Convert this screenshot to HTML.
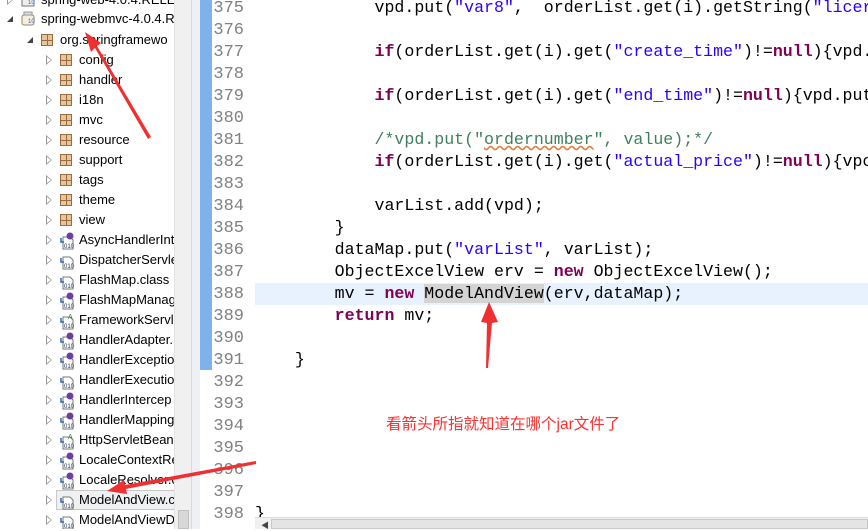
<!DOCTYPE html>
<html><head><meta charset="utf-8"><style>
*{margin:0;padding:0;box-sizing:border-box}
body{width:868px;height:529px;overflow:hidden;background:#fff;position:relative;font-family:"Liberation Sans","Noto Sans CJK SC",sans-serif}
.tree{position:absolute;left:0;top:0;width:174px;height:529px;background:#fff;overflow:hidden}
.row{position:absolute;height:20px;line-height:20px;font-size:13px;color:#000;white-space:nowrap}
.tri{position:absolute;top:5px;width:0;height:0;border-top:5px solid transparent;border-bottom:5px solid transparent;border-left:6px solid #fff}
.tri:before{content:"";position:absolute;left:-7px;top:-5px;border-top:5px solid transparent;border-bottom:5px solid transparent;border-left:6px solid #999}
.tri i{position:absolute;left:-6px;top:-3px;border-top:3px solid transparent;border-bottom:3px solid transparent;border-left:4px solid #fff}
.open{position:absolute;top:7px;width:0;height:0;border-left:6px solid transparent;border-bottom:6px solid #444}
.pk{position:absolute;top:4px;width:12px;height:12px;background:
linear-gradient(#9a6a40,#9a6a40) 0 5px/12px 1px no-repeat,
linear-gradient(#9a6a40,#9a6a40) 5px 0/1px 12px no-repeat,#e8c49a;border:1px solid #9a6a40}
.ic{position:absolute;top:2px}
.vs{position:absolute;left:174px;top:0;width:17px;height:529px;background:#f0f0f0;border-left:1px solid #e3e3e3}
.gutL{position:absolute;left:191px;top:0;width:9px;height:529px;background:#eef0f6;border-left:1px solid #d8d8e4}
.chk{position:absolute;left:200px;top:0;width:12px;height:370px;background:#7fb2ea}
.ln{position:absolute;left:212px;width:38px;text-align:right;padding-right:6px;font-family:"Liberation Mono",monospace;font-size:17px;color:#808080;height:22px;line-height:24px;background:#fff}
.cl{position:absolute;left:255px;height:22px;line-height:22px;font-family:"Liberation Mono",monospace;font-size:16.6px;color:#000;white-space:pre;width:613px}
.k{color:#7f0055;font-weight:bold}.s{color:#2a00ff}.c{color:#3f7f5f}
.hl{background:#e8f2fe}
.sel{background:#d4d4d4}
.hs{position:absolute;left:255px;top:517px;width:613px;height:12px;background:#f0f0f0;border-top:1px solid #ddd}
</style></head><body>
<div class="tree">
<div class="row" style="top:-10px;left:0;width:174px"><span class="tri" style="left:8px"><i></i></span><svg class="ic" style="left:20px" width="16" height="16"><rect x="2" y="3" width="12" height="11" fill="#eee" stroke="#777"/><text x="8" y="12" font-size="6" fill="#36c" font-family="Liberation Sans">10</text></svg><span style="position:absolute;left:41px">spring-web-4.0.4.RELEA</span></div>
<div class="row" style="top:9px;left:0;width:174px"><span class="open" style="left:7px"></span><svg class="ic" style="left:20px" width="16" height="16"><rect x="2" y="4" width="12" height="10" rx="2" fill="#f4eedc" stroke="#998866"/><rect x="4" y="1" width="8" height="3" fill="#ddd" stroke="#999"/><text x="8" y="12" font-size="6" fill="#36c" font-family="Liberation Sans">10</text></svg><span style="position:absolute;left:41px">spring-webmvc-4.0.4.R</span></div>
<div class="row" style="top:30px;left:0;width:174px"><span class="open" style="left:27px"></span><span class="pk" style="left:41px"></span><span style="position:absolute;left:60px">org.springframewo</span></div>
<div class="row" style="top:490px;left:56px;width:120px;height:20px;background:#eef0f2;border:1px solid #c8c8c8"></div>
</div>
<div class="vs"><div style="position:absolute;left:3px;top:510px;width:11px;height:19px;background:#d8d8d8;border:1px solid #c0c0c0"></div></div>
<div class="gutL"></div>
<div class="chk"></div>

<div class="ln" style="top:-3px">375</div><div class="ln" style="top:19px">376</div><div class="ln" style="top:41px">377</div><div class="ln" style="top:63px">378</div><div class="ln" style="top:85px">379</div><div class="ln" style="top:107px">380</div><div class="ln" style="top:129px">381</div><div class="ln" style="top:151px">382</div><div class="ln" style="top:173px">383</div><div class="ln" style="top:195px">384</div><div class="ln" style="top:217px">385</div><div class="ln" style="top:239px">386</div><div class="ln" style="top:261px">387</div><div class="ln" style="top:283px">388</div><div class="ln" style="top:305px">389</div><div class="ln" style="top:327px">390</div><div class="ln" style="top:349px">391</div><div class="ln" style="top:371px">392</div><div class="ln" style="top:393px">393</div><div class="ln" style="top:415px">394</div><div class="ln" style="top:437px">395</div><div class="ln" style="top:459px">396</div><div class="ln" style="top:481px">397</div><div class="ln" style="top:503px">398</div>

<div class="cl" style="top:-3px">            vpd.put(<span class="s">"var8"</span>,  orderList.get(i).getString(<span class="s">"licer</span></div>
<div class="cl" style="top:41px">            <span class="k">if</span>(orderList.get(i).get(<span class="s">"create_time"</span>)!=<span class="k">null</span>){vpd.</div>
<div class="cl" style="top:85px">            <span class="k">if</span>(orderList.get(i).get(<span class="s">"end_time"</span>)!=<span class="k">null</span>){vpd.put</div>
<div class="cl c" style="top:129px">            /*vpd.put("<span style="text-decoration:underline wavy #e08040">ordernumber</span>", value);*/</div>
<div class="cl" style="top:151px">            <span class="k">if</span>(orderList.get(i).get(<span class="s">"actual_price"</span>)!=<span class="k">null</span>){vpc</div>
<div class="cl" style="top:195px">            varList.add(vpd);</div>
<div class="cl" style="top:217px">        }</div>
<div class="cl" style="top:239px">        dataMap.put(<span class="s">"varList"</span>, varList);</div>
<div class="cl" style="top:261px">        ObjectExcelView erv = <span class="k">new</span> ObjectExcelView();</div>
<div class="cl hl" style="top:283px">        mv = <span class="k">new</span> <span class="sel">ModelAndView</span>(erv,dataMap);</div>
<div class="cl" style="top:305px">        <span class="k">return</span> mv;</div>
<div class="cl" style="top:349px">    }</div>
<div class="cl" style="top:503px">}</div>
<div style="position:absolute;left:386px;top:412px;font-size:15.5px;color:#ff3030;font-family:'Liberation Sans','Noto Sans CJK SC',sans-serif">看箭头所指就知道在哪个jar文件了</div>
<div class="hs"><span style="position:absolute;left:6px;top:2px;font-size:8px;color:#444">◀</span><div style="position:absolute;left:16px;top:1px;width:597px;height:10px;background:#e4e4e4;border:1px solid #c8c8c8"></div></div>

<div style="position:absolute;left:0;top:0">
<div class="row" style="top:50px"><span class="tri" style="left:47px"><i></i></span><span class="pk" style="left:60px"></span><span style="position:absolute;left:79px">config</span></div>
<div class="row" style="top:70px"><span class="tri" style="left:47px"><i></i></span><span class="pk" style="left:60px"></span><span style="position:absolute;left:79px">handler</span></div>
<div class="row" style="top:90px"><span class="tri" style="left:47px"><i></i></span><span class="pk" style="left:60px"></span><span style="position:absolute;left:79px">i18n</span></div>
<div class="row" style="top:110px"><span class="tri" style="left:47px"><i></i></span><span class="pk" style="left:60px"></span><span style="position:absolute;left:79px">mvc</span></div>
<div class="row" style="top:130px"><span class="tri" style="left:47px"><i></i></span><span class="pk" style="left:60px"></span><span style="position:absolute;left:79px">resource</span></div>
<div class="row" style="top:150px"><span class="tri" style="left:47px"><i></i></span><span class="pk" style="left:60px"></span><span style="position:absolute;left:79px">support</span></div>
<div class="row" style="top:170px"><span class="tri" style="left:47px"><i></i></span><span class="pk" style="left:60px"></span><span style="position:absolute;left:79px">tags</span></div>
<div class="row" style="top:190px"><span class="tri" style="left:47px"><i></i></span><span class="pk" style="left:60px"></span><span style="position:absolute;left:79px">theme</span></div>
<div class="row" style="top:210px"><span class="tri" style="left:47px"><i></i></span><span class="pk" style="left:60px"></span><span style="position:absolute;left:79px">view</span></div>
</div>
<div style="position:absolute;left:0;top:0;width:174px;height:529px;overflow:hidden">
<div class="row" style="top:230px"><span class="tri" style="left:47px"><i></i></span><svg class="ic" style="left:58px" width="18" height="18"><path d="M5 5h7l3 3v9H5z" fill="#fff" stroke="#777"/><text x="6" y="16" font-size="6" fill="#235" font-family="Liberation Sans">010</text><circle cx="12" cy="4" r="3.5" fill="#6a3fa0"/><path d="M3 6v4h3" stroke="#2a6ab0" fill="none" stroke-width="1.5"/></svg><span style="position:absolute;left:79px">AsyncHandlerInt</span></div>
<div class="row" style="top:250px"><span class="tri" style="left:47px"><i></i></span><svg class="ic" style="left:58px" width="18" height="18"><path d="M5 5h7l3 3v9H5z" fill="#fff" stroke="#777"/><text x="6" y="16" font-size="6" fill="#235" font-family="Liberation Sans">010</text><path d="M3 6v4h3" stroke="#2a6ab0" fill="none" stroke-width="1.5"/></svg><span style="position:absolute;left:79px">DispatcherServle</span></div>
<div class="row" style="top:270px"><span class="tri" style="left:47px"><i></i></span><svg class="ic" style="left:58px" width="18" height="18"><path d="M5 5h7l3 3v9H5z" fill="#fff" stroke="#777"/><text x="6" y="16" font-size="6" fill="#235" font-family="Liberation Sans">010</text><path d="M3 6v4h3" stroke="#2a6ab0" fill="none" stroke-width="1.5"/></svg><span style="position:absolute;left:79px">FlashMap.class</span></div>
<div class="row" style="top:290px"><span class="tri" style="left:47px"><i></i></span><svg class="ic" style="left:58px" width="18" height="18"><path d="M5 5h7l3 3v9H5z" fill="#fff" stroke="#777"/><text x="6" y="16" font-size="6" fill="#235" font-family="Liberation Sans">010</text><circle cx="12" cy="4" r="3.5" fill="#6a3fa0"/><path d="M3 6v4h3" stroke="#2a6ab0" fill="none" stroke-width="1.5"/></svg><span style="position:absolute;left:79px">FlashMapManag</span></div>
<div class="row" style="top:310px"><span class="tri" style="left:47px"><i></i></span><svg class="ic" style="left:58px" width="18" height="18"><path d="M5 5h7l3 3v9H5z" fill="#fff" stroke="#777"/><text x="6" y="16" font-size="6" fill="#235" font-family="Liberation Sans">010</text><text x="10" y="7" font-size="7" fill="#2a8a2a" font-family="Liberation Sans">A</text><path d="M3 6v4h3" stroke="#2a6ab0" fill="none" stroke-width="1.5"/></svg><span style="position:absolute;left:79px">FrameworkServle</span></div>
<div class="row" style="top:330px"><span class="tri" style="left:47px"><i></i></span><svg class="ic" style="left:58px" width="18" height="18"><path d="M5 5h7l3 3v9H5z" fill="#fff" stroke="#777"/><text x="6" y="16" font-size="6" fill="#235" font-family="Liberation Sans">010</text><circle cx="12" cy="4" r="3.5" fill="#6a3fa0"/><path d="M3 6v4h3" stroke="#2a6ab0" fill="none" stroke-width="1.5"/></svg><span style="position:absolute;left:79px">HandlerAdapter.</span></div>
<div class="row" style="top:350px"><span class="tri" style="left:47px"><i></i></span><svg class="ic" style="left:58px" width="18" height="18"><path d="M5 5h7l3 3v9H5z" fill="#fff" stroke="#777"/><text x="6" y="16" font-size="6" fill="#235" font-family="Liberation Sans">010</text><circle cx="12" cy="4" r="3.5" fill="#6a3fa0"/><path d="M3 6v4h3" stroke="#2a6ab0" fill="none" stroke-width="1.5"/></svg><span style="position:absolute;left:79px">HandlerExceptio</span></div>
<div class="row" style="top:370px"><span class="tri" style="left:47px"><i></i></span><svg class="ic" style="left:58px" width="18" height="18"><path d="M5 5h7l3 3v9H5z" fill="#fff" stroke="#777"/><text x="6" y="16" font-size="6" fill="#235" font-family="Liberation Sans">010</text><path d="M3 6v4h3" stroke="#2a6ab0" fill="none" stroke-width="1.5"/></svg><span style="position:absolute;left:79px">HandlerExecutio</span></div>
<div class="row" style="top:390px"><span class="tri" style="left:47px"><i></i></span><svg class="ic" style="left:58px" width="18" height="18"><path d="M5 5h7l3 3v9H5z" fill="#fff" stroke="#777"/><text x="6" y="16" font-size="6" fill="#235" font-family="Liberation Sans">010</text><circle cx="12" cy="4" r="3.5" fill="#6a3fa0"/><path d="M3 6v4h3" stroke="#2a6ab0" fill="none" stroke-width="1.5"/></svg><span style="position:absolute;left:79px">HandlerIntercep</span></div>
<div class="row" style="top:410px"><span class="tri" style="left:47px"><i></i></span><svg class="ic" style="left:58px" width="18" height="18"><path d="M5 5h7l3 3v9H5z" fill="#fff" stroke="#777"/><text x="6" y="16" font-size="6" fill="#235" font-family="Liberation Sans">010</text><circle cx="12" cy="4" r="3.5" fill="#6a3fa0"/><path d="M3 6v4h3" stroke="#2a6ab0" fill="none" stroke-width="1.5"/></svg><span style="position:absolute;left:79px">HandlerMapping</span></div>
<div class="row" style="top:430px"><span class="tri" style="left:47px"><i></i></span><svg class="ic" style="left:58px" width="18" height="18"><path d="M5 5h7l3 3v9H5z" fill="#fff" stroke="#777"/><text x="6" y="16" font-size="6" fill="#235" font-family="Liberation Sans">010</text><text x="10" y="7" font-size="7" fill="#2a8a2a" font-family="Liberation Sans">A</text><path d="M3 6v4h3" stroke="#2a6ab0" fill="none" stroke-width="1.5"/></svg><span style="position:absolute;left:79px">HttpServletBean.</span></div>
<div class="row" style="top:450px"><span class="tri" style="left:47px"><i></i></span><svg class="ic" style="left:58px" width="18" height="18"><path d="M5 5h7l3 3v9H5z" fill="#fff" stroke="#777"/><text x="6" y="16" font-size="6" fill="#235" font-family="Liberation Sans">010</text><circle cx="12" cy="4" r="3.5" fill="#6a3fa0"/><path d="M3 6v4h3" stroke="#2a6ab0" fill="none" stroke-width="1.5"/></svg><span style="position:absolute;left:79px">LocaleContextRe</span></div>
<div class="row" style="top:470px"><span class="tri" style="left:47px"><i></i></span><svg class="ic" style="left:58px" width="18" height="18"><path d="M5 5h7l3 3v9H5z" fill="#fff" stroke="#777"/><text x="6" y="16" font-size="6" fill="#235" font-family="Liberation Sans">010</text><circle cx="12" cy="4" r="3.5" fill="#6a3fa0"/><path d="M3 6v4h3" stroke="#2a6ab0" fill="none" stroke-width="1.5"/></svg><span style="position:absolute;left:79px">LocaleResolver.c</span></div>
<div class="row" style="top:490px"><span class="tri" style="left:47px"><i></i></span><svg class="ic" style="left:58px" width="18" height="18"><path d="M5 5h7l3 3v9H5z" fill="#fff" stroke="#777"/><text x="6" y="16" font-size="6" fill="#235" font-family="Liberation Sans">010</text><path d="M3 6v4h3" stroke="#2a6ab0" fill="none" stroke-width="1.5"/></svg><span style="position:absolute;left:79px">ModelAndView.c</span></div>
<div class="row" style="top:510px"><span class="tri" style="left:47px"><i></i></span><svg class="ic" style="left:58px" width="18" height="18"><path d="M5 5h7l3 3v9H5z" fill="#fff" stroke="#777"/><text x="6" y="16" font-size="6" fill="#235" font-family="Liberation Sans">010</text><path d="M3 6v4h3" stroke="#2a6ab0" fill="none" stroke-width="1.5"/></svg><span style="position:absolute;left:79px">ModelAndViewD</span></div>
</div>
<svg style="position:absolute;left:0;top:0;pointer-events:none" width="868" height="529">
<polygon points="151,137 148,139 95,48 91,52 85,32 101,43 97,46" fill="#f03030"/>
<polygon points="256,461 256,464 126,489 127,494 107,491 124,480 125,485" fill="#f03030"/>
<polygon points="486,368 488,368 492,323 498,322 489,302 481,322 487,323" fill="#f03030"/>
</svg>
</body></html>
